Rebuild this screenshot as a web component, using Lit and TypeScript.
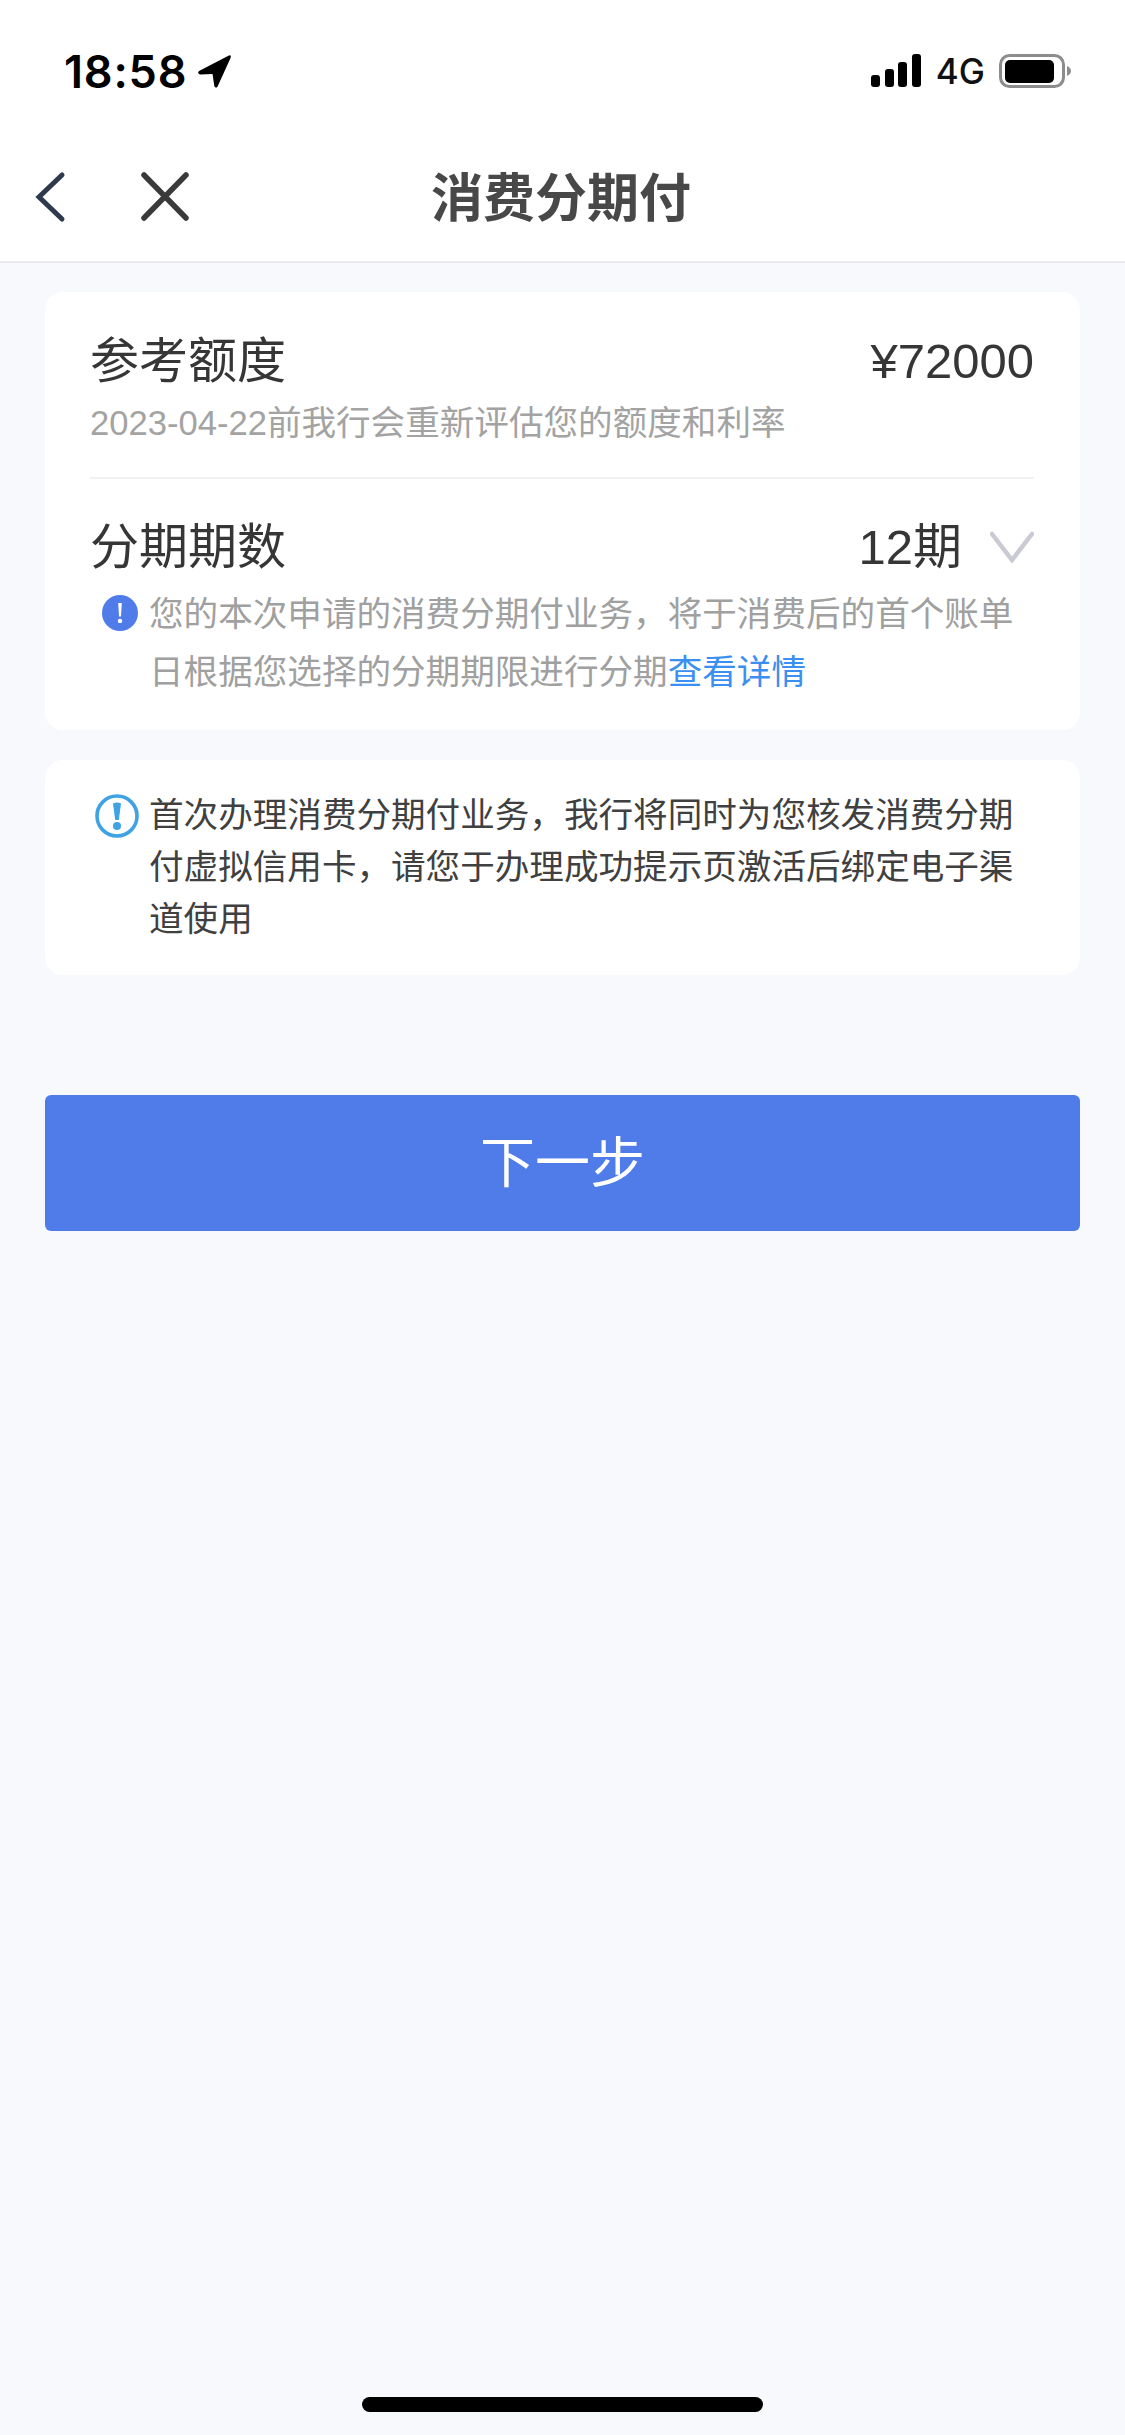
import { LitElement, html, css } from "lit";
import { customElement } from "lit/decorators.js";

@customElement("app-root")
export class AppRoot extends LitElement {
  static styles = css`
    :host {
      display: block;
      width: 1125px;
      font-family: "Liberation Sans", "Noto Sans CJK SC", sans-serif;
    }
    * { box-sizing: border-box; }
    svg { display: block; flex: none; }
    .page {
      min-height: 2435px;
      background: #f7f9fd;
      display: flex;
      flex-direction: column;
      overflow: hidden;
    }
    .header {
      background: #fff;
      border-bottom: 2px solid #ebebee;
      height: 263px;
    }
    .status {
      height: 133px;
      padding: 54px 53px 0 64px;
      display: flex;
      justify-content: space-between;
      align-items: flex-start;
    }
    .status-left { display: flex; align-items: flex-start; gap: 9px; }
    .time {
      font-family: Inter, "Liberation Sans", sans-serif;
      font-size: 45px;
      font-weight: 600;
      line-height: 35px;
      color: #000;
      letter-spacing: 0.8px;
    }
    .status-right { display: flex; align-items: flex-start; }
    .net {
      font-family: Inter, "Liberation Sans", sans-serif;
      font-size: 35px;
      font-weight: 500;
      line-height: 34px;
      color: #111;
      margin: 0 14px 0 15px;
    }
    .nav {
      height: 128px;
      display: grid;
      grid-template-columns: 1fr auto 1fr;
      align-items: center;
      padding: 0 3px 0 0;
    }
    .nav-left { display: flex; align-items: center; padding-left: 34px; gap: 73px; }
    .title {
      font-size: 52px;
      font-weight: 700;
      line-height: 64px;
      color: #484848;
      padding-top: 3px;
    }
    .main {
      padding: 29px 45px 0;
      display: flex;
      flex-direction: column;
    }
    .card {
      background: #fff;
      border-radius: 18px;
    }
    .limit { padding: 39px 46px 29px 45px; }
    .row {
      display: flex;
      justify-content: space-between;
      align-items: center;
      font-size: 49px;
      line-height: 60px;
      color: #363636;
    }
    .sub {
      font-size: 34.6px;
      line-height: 44px;
      color: #a3a3a3;
      margin-top: 10px;
    }
    .divider {
      height: 2px;
      background: #f1f1f3;
      margin: 32px 0 38px;
    }
    .term { display: flex; align-items: center; gap: 28px; }
    .note {
      display: flex;
      margin: 8px 0 0 12px;
      gap: 11px;
      font-size: 34.6px;
      line-height: 58px;
      color: #a0a0a0;
    }
    .note svg { margin-top: 10px; }
    .link { color: #3b8ff0; }
    .tip {
      margin-top: 30px;
      padding: 29px 46px 30px 50px;
      display: flex;
      gap: 10px;
      font-size: 34.6px;
      line-height: 52px;
      color: #404040;
    }
    .tip svg { margin-top: 5px; }
    .next {
      margin-top: 120px;
      height: 136px;
      background: #4f7ce9;
      border-radius: 6px;
      color: #fff;
      font-size: 55px;
      line-height: 136px;
      text-align: center;
    }
    .home {
      margin: auto 0 23px 362px;
      width: 401px;
      height: 15px;
      border-radius: 8px;
      background: #000;
    }
  `;

  render() {
    return html`
      <div class="page">
        <div class="header">
          <div class="status">
            <div class="status-left">
              <span class="time">18:58</span>
              <svg width="37" height="35" viewBox="0 0 35 34">
                <path d="M2.5 16.5 L31 1.6 Q34.2 0.4 33.2 3.6 L20.5 31.5 Q18.6 34 17.3 31 L15.6 19.4 L3.4 19.9 Q0.4 18.3 2.5 16.5 Z" fill="#000"/>
              </svg>
            </div>
            <div class="status-right">
              <svg width="50" height="33" viewBox="0 0 50 33" fill="#000">
                <rect x="0" y="21" width="9" height="12" rx="3"/>
                <rect x="14" y="15" width="9" height="18" rx="3"/>
                <rect x="27" y="8" width="9" height="25" rx="3"/>
                <rect x="41" y="0" width="9" height="33" rx="3"/>
              </svg>
              <span class="net">4G</span>
              <svg width="73" height="34" viewBox="0 0 73 34">
                <rect x="1.5" y="1.5" width="63" height="31" rx="9" fill="none" stroke="#8c8c8c" stroke-width="3"/>
                <rect x="6" y="6" width="49" height="23" rx="5" fill="#000"/>
                <path d="M68 12 Q72 14 72 17 Q72 20 68 22 Z" fill="#8c8c8c"/>
              </svg>
            </div>
          </div>
          <div class="nav">
            <div class="nav-left">
              <svg width="32" height="52" viewBox="0 0 32 52">
                <path d="M28 4 L5 26 L28 48" fill="none" stroke="#2f3a4d" stroke-width="5" stroke-linecap="round" stroke-linejoin="miter"/>
              </svg>
              <svg width="52" height="52" viewBox="0 0 52 52">
                <path d="M5 4 L47 47 M47 4 L5 47" fill="none" stroke="#3a3a3a" stroke-width="5.5" stroke-linecap="round"/>
              </svg>
            </div>
            <div class="title">消费分期付</div>
            <div></div>
          </div>
        </div>
        <div class="main">
          <div class="card limit">
            <div class="row"><span>参考额度</span><span>¥72000</span></div>
            <div class="sub">2023-04-22前我行会重新评估您的额度和利率</div>
            <div class="divider"></div>
            <div class="row">
              <span>分期期数</span>
              <span class="term">
                <span>12期</span>
                <svg width="44" height="32" viewBox="0 0 44 32">
                  <path d="M2 3 L22 29 L42 3" fill="none" stroke="#c9cad3" stroke-width="4.5" stroke-linecap="round"/>
                </svg>
              </span>
            </div>
            <div class="note">
              <svg width="36" height="36" viewBox="0 0 36 36">
                <circle cx="18" cy="18" r="18" fill="#4f7ce9"/>
                <path d="M16.2 8 H19.8 L19 21.5 H17 Z" fill="#fff"/>
                <circle cx="18" cy="26" r="2.2" fill="#fff"/>
              </svg>
              <div>您的本次申请的消费分期付业务，将于消费后的首个账单日根据您选择的分期期限进行分期<span class="link">查看详情</span></div>
            </div>
          </div>
          <div class="card tip">
            <svg width="44" height="44" viewBox="0 0 44 44">
              <circle cx="22" cy="22" r="20" fill="none" stroke="#3fa2e3" stroke-width="3.6"/>
              <path d="M18 9.5 Q22 7.5 26 9.5 L23.8 26 H20.2 Z" fill="#3fa2e3"/>
              <circle cx="22" cy="32" r="4" fill="#3fa2e3"/>
            </svg>
            <div>首次办理消费分期付业务，我行将同时为您核发消费分期付虚拟信用卡，请您于办理成功提示页激活后绑定电子渠道使用</div>
          </div>
          <div class="next">下一步</div>
        </div>
        <div class="home"></div>
      </div>
    `;
  }
}
